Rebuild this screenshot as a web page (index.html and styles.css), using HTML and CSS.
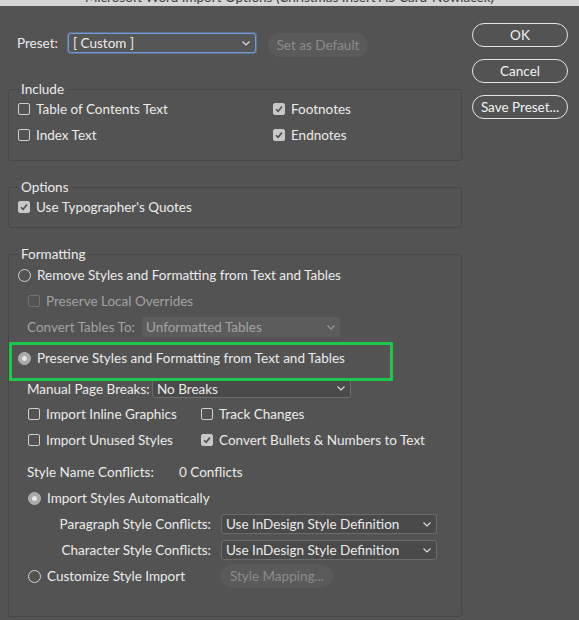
FILE: index.html
```
<!DOCTYPE html>
<html>
<head>
<meta charset="utf-8">
<link rel="stylesheet" href="styles.css">
</head>
<body>
<div class="titlebar"><span>Microsoft Word Import Options (Christmas Insert A5 Card-Nowlacek)</span></div>
<div class="dialog">
  <div class="left">
    <div class="preset-row">
      <span class="preset-label">Preset:</span>
      <div class="select preset-select"><span>[ Custom ]</span><svg class="chev" width="8" height="5" viewBox="0 0 8 5"><polyline points="0.5,0.5 4,4 7.5,0.5" fill="none" stroke="#dcdcdc" stroke-width="1.2"/></svg></div>
      <div class="pill disabled set-default">Set as Default</div>
    </div>

    <fieldset class="box include">
      <legend>Include</legend>
      <div class="cols">
        <div class="col col-wide">
          <div class="row"><span class="cb"></span>Table of Contents Text</div>
          <div class="row"><span class="cb"></span>Index Text</div>
        </div>
        <div class="col">
          <div class="row"><span class="cb checked"><svg width="12" height="12" viewBox="0 0 12 12"><path d="M3 6.2 L5.1 8.3 L9 3.6" fill="none" stroke="#4e4e4e" stroke-width="1.6"/></svg></span>Footnotes</div>
          <div class="row"><span class="cb checked"><svg width="12" height="12" viewBox="0 0 12 12"><path d="M3 6.2 L5.1 8.3 L9 3.6" fill="none" stroke="#4e4e4e" stroke-width="1.6"/></svg></span>Endnotes</div>
        </div>
      </div>
    </fieldset>

    <fieldset class="box options">
      <legend>Options</legend>
      <div class="row"><span class="cb checked"><svg width="12" height="12" viewBox="0 0 12 12"><path d="M3 6.2 L5.1 8.3 L9 3.6" fill="none" stroke="#4e4e4e" stroke-width="1.6"/></svg></span>Use Typographer's Quotes</div>
    </fieldset>

    <fieldset class="box formatting">
      <legend>Formatting</legend>
      <div class="row"><span class="rb"></span>Remove Styles and Formatting from Text and Tables</div>
      <div class="row indent dim"><span class="cb off"></span>Preserve Local Overrides</div>
      <div class="row indent-t dim">
        <span class="lbl-convert">Convert Tables To:</span>
        <div class="select convert-select"><span>Unformatted Tables</span><svg class="chev" width="8" height="5" viewBox="0 0 8 5"><polyline points="0.5,0.5 4,4 7.5,0.5" fill="none" stroke="#9a9a9a" stroke-width="1.2"/></svg></div>
      </div>
      <div class="row preserve-row">
        <span class="rb on"></span>Preserve Styles and Formatting from Text and Tables
        <div class="highlight"></div>
      </div>
      <div class="row indent-t manual-row">
        <span class="lbl-manual">Manual Page Breaks:</span>
        <div class="select dark manual-select"><span>No Breaks</span><svg class="chev" width="8" height="5" viewBox="0 0 8 5"><polyline points="0.5,0.5 4,4 7.5,0.5" fill="none" stroke="#dcdcdc" stroke-width="1.2"/></svg></div>
      </div>
      <div class="cols indent">
        <div class="col col-narrow">
          <div class="row"><span class="cb"></span>Import Inline Graphics</div>
          <div class="row"><span class="cb"></span>Import Unused Styles</div>
        </div>
        <div class="col">
          <div class="row"><span class="cb"></span>Track Changes</div>
          <div class="row"><span class="cb checked"><svg width="12" height="12" viewBox="0 0 12 12"><path d="M3 6.2 L5.1 8.3 L9 3.6" fill="none" stroke="#4e4e4e" stroke-width="1.6"/></svg></span>Convert Bullets &amp; Numbers to Text</div>
        </div>
      </div>
      <div class="row indent-t conflicts-row">
        <span class="lbl-conflicts">Style Name Conflicts:</span>
        <span>0 Conflicts</span>
      </div>
      <div class="row indent"><span class="rb on"></span>Import Styles Automatically</div>
      <div class="row">
        <span class="lbl-right">Paragraph Style Conflicts:</span>
        <div class="select dark def-select"><span>Use InDesign Style Definition</span><svg class="chev" width="8" height="5" viewBox="0 0 8 5"><polyline points="0.5,0.5 4,4 7.5,0.5" fill="none" stroke="#dcdcdc" stroke-width="1.2"/></svg></div>
      </div>
      <div class="row">
        <span class="lbl-right">Character Style Conflicts:</span>
        <div class="select dark def-select"><span>Use InDesign Style Definition</span><svg class="chev" width="8" height="5" viewBox="0 0 8 5"><polyline points="0.5,0.5 4,4 7.5,0.5" fill="none" stroke="#dcdcdc" stroke-width="1.2"/></svg></div>
      </div>
      <div class="row indent">
        <span class="rb"></span><span class="lbl-customize">Customize Style Import</span>
        <div class="pill disabled mapping">Style Mapping...</div>
      </div>
    </fieldset>
  </div>

  <div class="right">
    <div class="pill btn">OK</div>
    <div class="pill btn">Cancel</div>
    <div class="pill btn">Save Preset...</div>
  </div>
</div>
</body>
</html>
```
FILE: styles.css
```
* { box-sizing: border-box; }
html, body { margin: 0; padding: 0; }
body {
  width: 579px;
  height: 620px;
  overflow: hidden;
  background: #535353;
  font-family: Lato, "Liberation Sans", sans-serif;
  font-size: 13.5px;
  color: #ebebeb;
}
.titlebar {
  height: 6px;
  background: #d4d4d4;
  overflow: hidden;
  text-align: center;
  color: #3c3c3c;
  font-size: 13.5px;
}
.titlebar span {
  display: block;
  line-height: 16px;
  margin-top: -11px;
}
.dialog { display: flex; }
.left { width: 462px; padding-left: 8px; }
.right {
  width: 96px;
  margin-left: 10px;
  padding-top: 17px;
  display: flex;
  flex-direction: column;
  gap: 12px;
}
.pill {
  height: 24px;
  border-radius: 12px;
  display: flex;
  align-items: center;
  justify-content: center;
  white-space: nowrap;
}
.btn {
  border: 1.5px solid #e4e4e4;
  color: #f2f2f2;
}
.disabled {
  background: #5a5a5a;
  color: #8c8c8c;
}
.preset-row {
  display: flex;
  align-items: flex-start;
  margin-top: 27px;
  padding-left: 9px;
}
.preset-label { width: 51px; line-height: 20px; }
.select {
  display: flex;
  align-items: center;
  justify-content: space-between;
  padding: 0 5px 0 4px;
  border-radius: 3px;
  white-space: nowrap;
}
.chev { flex: none; }
.preset-select {
  width: 188px;
  height: 20px;
  border: 1px solid #6f9bd6;
  box-shadow: 0 0 0 1px rgba(110, 150, 210, 0.45);
  background: #565656;
}
.set-default { width: 100px; margin-left: 12px; }

fieldset.box {
  margin: 0;
  width: 454px;
  min-width: 0;
  border: 1px solid #474747;
  border-radius: 3px;
  padding: 0 9px;
}
fieldset.box legend {
  padding: 0 3px;
  line-height: 14px;
}
fieldset.include { margin-top: 25px; padding-bottom: 12px; }
fieldset.options { margin-top: 19px; padding-bottom: 7px; }
fieldset.formatting { margin-top: 19px; padding-top: 1px; padding-bottom: 27px; }

.cols { display: flex; }
.col-wide { width: 255px; }
.col-narrow { width: 173px; }
.row {
  display: flex;
  align-items: center;
  height: 26px;
  white-space: nowrap;
}
.indent { padding-left: 10px; }
.indent-t { padding-left: 9px; }
.dim { color: #a2a2a2; }
.cb {
  width: 12px;
  height: 12px;
  border: 1px solid #cfcfcf;
  border-radius: 2px;
  margin-right: 6px;
  flex: none;
  position: relative;
}
.cb.off { border-color: #727272; }
.cb.checked {
  background: #c8c8c8;
  border-color: #c8c8c8;
}
.cb.checked svg { position: absolute; left: -1px; top: -1px; }
.rb {
  width: 13px;
  height: 13px;
  border: 1px solid #d4d4d4;
  border-radius: 50%;
  margin-right: 6px;
  flex: none;
  display: flex;
  align-items: center;
  justify-content: center;
}
.rb.on {
  background: #a9a9a9;
  border-color: #b4b4b4;
}
.rb.on::after {
  content: "";
  width: 5px;
  height: 5px;
  border-radius: 50%;
  background: #e6e6e6;
}
.lbl-convert { width: 115px; }
.convert-select {
  width: 198px;
  height: 20px;
  background: #5c5c5c;
  color: #a4a4a4;
}
.preserve-row { height: 36px; position: relative; }
.highlight {
  position: absolute;
  left: -9px;
  top: 2px;
  width: 384px;
  height: 39px;
  border: 3px solid #1fc64d;
  pointer-events: none;
}
.manual-row { height: 25px; }
.lbl-manual { width: 125px; }
.dark {
  background: #4a4a4a;
  border: 1px solid #6c6c6c;
}
.manual-select { width: 199px; height: 19px; }
.conflicts-row { margin-top: 6px; }
.lbl-conflicts { width: 152px; }
.lbl-right { width: 193px; text-align: right; margin-right: 10px; }
.def-select { width: 216px; height: 20px; }
.lbl-customize { width: 174px; }
.mapping { width: 112px; }
```
